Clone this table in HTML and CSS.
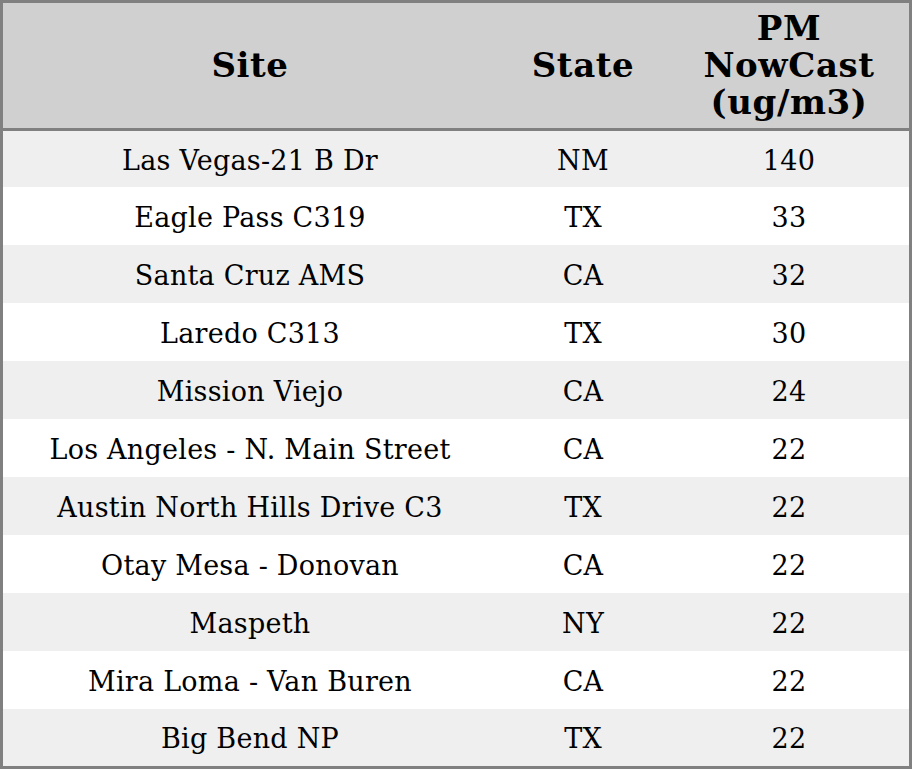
FILE: index.html
```html
<!DOCTYPE html>
<html>
<head>
<meta charset="utf-8">
<link rel="stylesheet" href="styles.css">
</head>
<body>
<table class="aq-table">
  <colgroup>
    <col class="col-site">
    <col class="col-state">
    <col class="col-pm">
  </colgroup>
  <thead>
    <tr>
      <th>Site</th>
      <th>State</th>
      <th>PM<br>NowCast<br>(ug/m3)</th>
    </tr>
  </thead>
  <tbody>
    <tr class="first"><td>Las Vegas-21 B Dr</td><td>NM</td><td>140</td></tr>
    <tr><td>Eagle Pass C319</td><td>TX</td><td>33</td></tr>
    <tr><td>Santa Cruz AMS</td><td>CA</td><td>32</td></tr>
    <tr><td>Laredo C313</td><td>TX</td><td>30</td></tr>
    <tr><td>Mission Viejo</td><td>CA</td><td>24</td></tr>
    <tr><td>Los Angeles - N. Main Street</td><td>CA</td><td>22</td></tr>
    <tr><td>Austin North Hills Drive C3</td><td>TX</td><td>22</td></tr>
    <tr><td>Otay Mesa - Donovan</td><td>CA</td><td>22</td></tr>
    <tr><td>Maspeth</td><td>NY</td><td>22</td></tr>
    <tr><td>Mira Loma - Van Buren</td><td>CA</td><td>22</td></tr>
    <tr class="last"><td>Big Bend NP</td><td>TX</td><td>22</td></tr>
  </tbody>
</table>
</body>
</html>
```
FILE: styles.css
```css
html, body {
  margin: 0;
  padding: 0;
  background: #ffffff;
}

.aq-table {
  width: 912px;
  border: 3px solid #808080;
  border-spacing: 0;
  font-family: "DejaVu Serif", serif;
  color: #000000;
  table-layout: fixed;
}

.col-site { width: 494px; }
.col-state { width: 172px; }
.col-pm { width: 240px; }

.aq-table th {
  background: #d0d0d0;
  font-size: 34px;
  line-height: 37px;
  letter-spacing: 0.6px;
  font-weight: bold;
  height: 125px;
  padding: 0;
  border-bottom: 3px solid #808080;
  text-align: center;
  vertical-align: middle;
}

.aq-table td {
  font-size: 27px;
  letter-spacing: 0.25px;
  height: 56px;
  padding: 2px 0 0;
  text-align: center;
  vertical-align: middle;
}

.aq-table tr.first td { height: 54px; }
.aq-table tr.last td { height: 55px; }

.aq-table tbody tr:nth-child(odd) td {
  background: #efefef;
}

.aq-table tbody tr:nth-child(even) td {
  background: #ffffff;
}
```
